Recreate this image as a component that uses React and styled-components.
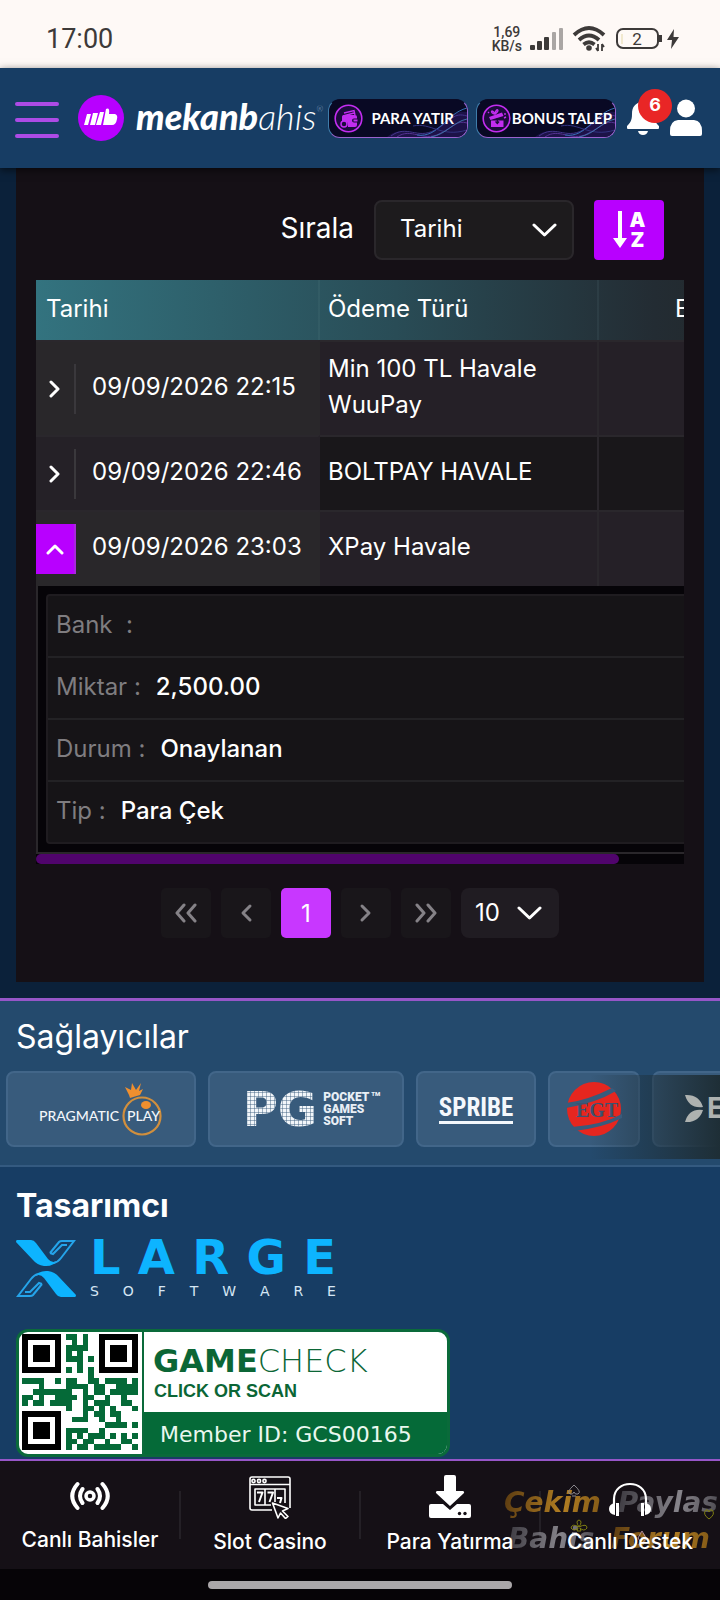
import React, { useState } from "react";
import styled, { createGlobalStyle, css } from "styled-components";

const GlobalStyle = createGlobalStyle`
  * { box-sizing: border-box; }
  body {
    margin: 0;
    background: #0b213a;
    color: #fff;
    font-family: Inter, "Open Sans", "Liberation Sans", sans-serif;
    overflow-x: hidden;
  }
  button, select { font-family: inherit; color: inherit; border: 0; padding: 0; }
  a { color: inherit; text-decoration: none; }
`;

const Page = styled.div`
  position: relative;
  min-height: 100vh;
  display: flex;
  flex-direction: column;
  overflow: hidden;
`;

/* status bar */
const StatusBar = styled.div`
  height: 68px;
  padding: 10px 40px 0 46px;
  display: flex;
  align-items: center;
  justify-content: space-between;
  background: #fef9f6;
  color: #3d3a39;
  font-family: Roboto, sans-serif;
  font-weight: 500;
`;
const Clock = styled.span`
  font-size: 27px;
  line-height: 32px;
  font-weight: 400;
`;
const StatusIcons = styled.div`
  display: flex;
  align-items: center;
  gap: 8px;
`;
const Speed = styled.span`
  font-size: 14px;
  line-height: 14px;
  text-align: center;
`;

/* header */
const Header = styled.header`
  position: relative;
  z-index: 1;
  height: 100px;
  padding: 0 18px 0 15px;
  display: flex;
  align-items: center;
  background: #173d64;
  box-shadow: 0 2px 8px rgba(0, 0, 0, 0.6);
`;
const MenuButton = styled.button`
  flex: none;
  width: 44px;
  height: 36px;
  margin: 4px 19px 0 0;
  display: flex;
  flex-direction: column;
  justify-content: space-between;
  background: none;
  span {
    height: 4px;
    width: 100%;
    border-radius: 2px;
    background: #ad4be6;
  }
`;
const Brand = styled.a`
  display: flex;
  align-items: center;
  gap: 12px;
  flex: 1;
  min-width: 0;
  svg { flex: none; }
`;
const Wordmark = styled.span`
  padding-bottom: 4px;
  font-family: Lato, sans-serif;
  font-style: italic;
  font-weight: 300;
  font-size: 36px;
  line-height: 40px;
  white-space: nowrap;
  b { font-weight: 900; }
  sup { font-size: 8px; line-height: 8px; vertical-align: 18px; color: #8fa6c0; }
`;
const Pill = styled.button`
  position: relative;
  flex: none;
  width: 140px;
  height: 39px;
  margin-right: ${(p) => (p.$tight ? 10 : 8)}px;
  padding: 0 ${(p) => (p.$tight ? 3 : 13)}px 0 5px;
  display: flex;
  align-items: center;
  justify-content: space-between;
  border: 1px solid #9a63cf;
  border-left-color: #3f7dab;
  border-top-color: #0a0a24;
  border-radius: 12px;
  background: #090924;
  overflow: hidden;
  font-family: Lato, sans-serif;
  font-size: 15px;
  line-height: 20px;
  font-weight: 700;
  white-space: nowrap;
  span, .badge { position: relative; flex: none; }
`;
const PillWave = styled.svg`
  position: absolute;
  right: 0;
  bottom: 0;
`;
const HeaderIcon = styled.button`
  position: relative;
  display: flex;
  background: none;
`;
const Count = styled.span`
  position: absolute;
  left: 12px;
  top: -12px;
  width: 34px;
  height: 34px;
  border-radius: 50%;
  background: #e92626;
  font-size: 18px;
  line-height: 32px;
  font-weight: 700;
  text-align: center;
`;

/* history panel */
const Panel = styled.main`
  margin: 0 16px 16px;
  padding: 32px 20px 44px;
  background: #151016;
`;
const SortBar = styled.div`
  display: flex;
  align-items: center;
  justify-content: flex-end;
  gap: 20px;
  padding-right: 20px;
  margin-bottom: 20px;
  label { padding-bottom: 4px; font-size: 28px; line-height: 36px; }
`;
const SelectBox = styled.div`
  position: relative;
  width: ${(p) => p.$width}px;
  select {
    appearance: none;
    width: 100%;
    height: ${(p) => (p.$small ? 50 : 60)}px;
    padding: 0 0 ${(p) => (p.$small ? 2 : 4)}px ${(p) => (p.$small ? 14 : 24)}px;
    border: ${(p) => (p.$small ? "0" : "2px solid #2a272b")};
    border-radius: 8px;
    background: ${(p) => (p.$small ? "#201c22" : "#1d1b1d")};
    font-size: 24px;
  }
  svg {
    position: absolute;
    right: 17px;
    top: 50%;
    margin-top: -7px;
    pointer-events: none;
  }
`;
const SortButton = styled.button`
  width: 70px;
  height: 60px;
  display: flex;
  align-items: center;
  justify-content: center;
  gap: 3px;
  border-radius: 4px;
  background: #b800ff;
  span {
    font-size: 20px;
    line-height: 20px;
    font-weight: 900;
  }
`;

const TableWrap = styled.div`
  overflow: hidden;
`;
const Table = styled.table`
  min-width: 720px;
  width: 111%;
  table-layout: fixed;
  border-collapse: separate;
  border-spacing: 0;
  font-size: 24px;
  line-height: 36px;
  col:nth-child(1) { width: 284px; }
  col:nth-child(2) { width: 279px; }
`;
const HeadRow = styled.tr`
  background: linear-gradient(90deg, #33737f 0, #294c56 50%, #232c33 86%, #22272a 100%);
`;
const Th = styled.th`
  height: 60px;
  padding: 0 0 2px ${(p) => p.$left || 8}px;
  border-right: 2px solid rgba(120, 160, 160, 0.1);
  font-weight: 400;
  text-align: left;
`;
const Td = styled.td`
  height: ${(p) => p.$height}px;
  padding: 0 8px 4px;
  border-top: 2px solid #2a272c;
  border-right: 2px solid #2a272c;
  background: ${(p) => (p.$dark ? "#19171a" : "#252027")};
`;
const DateTd = styled(Td)`
  padding: 0;
  border-right-color: transparent;
  background: ${(p) => (p.$dark ? "#252127" : "#29272a")};
`;
const DateCell = styled.div`
  display: flex;
  align-items: center;
  gap: 16px;
  span { padding-bottom: 4px; white-space: nowrap; }
`;
const Expand = styled.button`
  width: 40px;
  height: 50px;
  display: flex;
  align-items: center;
  justify-content: center;
  border-right: 2px solid #3a383c;
  background: none;
  ${(p) =>
    p.$open &&
    css`
      background: #b800ff;
      border-color: #a927dd;
    `}
`;
const DetailTd = styled.td`
  padding: 8px;
  border-left: 2px solid #2a272b;
  border-bottom: 2px solid #2a272b;
  background: #060408;
`;
const Details = styled.dl`
  margin: 0;
  border: 2px solid #1f1c20;
  border-radius: 4px;
  background: #161417;
`;
const Detail = styled.div`
  display: flex;
  align-items: center;
  height: 62px;
  padding: 0 8px 2px;
  border-bottom: 2px solid #232225;
  &:last-child { border-bottom: 0; height: 60px; }
  dt { color: #7f7d80; white-space: pre; }
  dd { margin: 0 0 0 15px; font-weight: 500; }
`;
const ScrollTrack = styled.div`
  height: 10px;
  background: #060408;
`;
const ScrollThumb = styled.div`
  width: 90%;
  height: 10px;
  border-radius: 5px;
  background: #50046c;
`;

const Pager = styled.nav`
  display: flex;
  justify-content: center;
  gap: 10px;
  margin-top: 24px;
`;
const PageButton = styled.button`
  width: 50px;
  height: 50px;
  display: flex;
  align-items: center;
  justify-content: center;
  border-radius: 5px;
  background: ${(p) => (p.$current ? "#c837ff" : "#19161a")};
  font-size: 24px;
`;

/* providers */
const Providers = styled.section`
  position: relative;
  border-top: 3px solid #9656c8;
  border-bottom: 2px solid #345a80;
  background: #244a6d;
  padding: 18px 0 18px 6px;
`;
const Title = styled.h2`
  margin: 0;
  font-size: 32px;
  line-height: 36px;
  font-weight: ${(p) => (p.$bold ? 700 : 400)};
`;
const ProviderTitle = styled(Title)`
  padding-left: 10px;
  margin-bottom: 16px;
`;
const Cards = styled.div`
  display: flex;
  gap: 12px;
  overflow: hidden;
`;
const Card = styled.a`
  flex: none;
  width: ${(p) => p.$width}px;
  height: 76px;
  display: flex;
  align-items: center;
  justify-content: center;
  gap: 6px;
  border: 2px solid #426689;
  border-radius: 8px;
  background: #385b7c;
  svg { position: relative; z-index: 1; }
`;
const Fade = styled.div`
  position: absolute;
  right: 0;
  bottom: 6px;
  width: 130px;
  height: 84px;
  background: linear-gradient(90deg, rgba(30, 46, 54, 0), rgba(30, 46, 54, 0.6) 60%, #1e2e36);
`;
const PixelText = styled.span`
  font: 700 48px/48px "DejaVu Sans", sans-serif;
  color: transparent;
  background:
    repeating-linear-gradient(90deg, transparent 0 3px, rgba(56, 91, 124, 0.45) 3px 4px),
    repeating-linear-gradient(transparent 0 3px, rgba(56, 91, 124, 0.45) 3px 4px),
    #f2f6fa;
  background-clip: text;
`;
const PixelSub = styled.span`
  position: relative;
  font: 900 12px/12px Roboto, sans-serif;
  color: #e8eef5;
  small { position: absolute; left: 48px; top: -3px; font-size: 6px; }
`;
const Spribe = styled.span`
  border-bottom: 3px solid #f4f8fc;
  font: 700 25px/26px "Liberation Sans Narrow", "Roboto Condensed", "DejaVu Sans Condensed", sans-serif;
  color: #f4f8fc;
`;

/* designer */
const Designer = styled.section`
  flex: 1;
  padding: 21px 16px 2px;
  background: #173d64;
`;
const XLarge = styled.a`
  display: flex;
  gap: 14px;
  margin-top: 15px;
  width: 320px;
`;
const XWords = styled.div`
  flex: 1;
`;
const Spread = styled.div`
  display: flex;
  justify-content: space-between;
  ${(p) =>
    p.$small
      ? css`font: 400 14px/14px "DejaVu Sans", sans-serif; color: #d5e6f4; margin-top: 9px;`
      : css`font: 700 48px/36px "DejaVu Sans", sans-serif; color: #0db4ff;`}
`;
const GameCheck = styled.a`
  display: flex;
  width: 434px;
  height: 128px;
  margin-top: 31px;
  border: 3px solid #0a6a3a;
  border-radius: 12px;
  background: #fff;
  overflow: hidden;
  color: #0b6636;
`;
const QrBox = styled.div`
  width: 125px;
  padding: 2px 0 0 3px;
  border-right: 2px solid #0a6a3a;
`;
const GameText = styled.div`
  flex: 1;
  display: flex;
  flex-direction: column;
`;
const GameName = styled.div`
  padding: 11px 0 0 9px;
  font: 200 32px/36px "DejaVu Sans", sans-serif;
  white-space: nowrap;
  b { font-weight: 700; }
`;
const GameSub = styled.div`
  padding-left: 10px;
  font: 700 18px/24px "Liberation Sans", sans-serif;
`;
const Member = styled.div`
  margin-top: auto;
  padding: 4px 0 0 16px;
  background: #056a38;
  color: #e9f8ef;
  font: 400 22px/38px "DejaVu Sans", sans-serif;
`;

/* bottom navigation */
const BottomNav = styled.nav`
  position: relative;
  display: flex;
  height: 110px;
  border-top: 2px solid #9656c8;
  background: #151016;
`;
const NavItem = styled.a`
  position: relative;
  z-index: 1;
  flex: 1 1 0;
  display: flex;
  flex-direction: column;
  align-items: center;
  padding-top: 14px;
  gap: 9px;
  font-size: 21px;
  line-height: 28px;
  font-weight: 500;
  white-space: nowrap;
`;
const Divider = styled.i`
  align-self: center;
  width: 2px;
  height: 48px;
  margin: 0 -1px;
  background: #242026;
`;
const Watermark = styled.div`
  position: absolute;
  right: 2px;
  top: 24px;
  width: 214px;
  font: italic 700 28px/36px "DejaVu Sans", sans-serif;
  opacity: 0.8;
  pointer-events: none;
  svg { position: absolute; left: 0; top: 0; }
`;
const WatermarkLine = styled.div`
  display: flex;
  justify-content: space-between;
  padding: 0 ${(p) => (p.$inset ? 8 : 0)}px 0 ${(p) => (p.$inset ? 4 : 0)}px;
`;
const Metal = styled.span`
  color: transparent;
  background: ${(p) =>
    p.$gold
      ? "linear-gradient(100deg, #6b4510, #d99a26 60%, #9c6a17)"
      : "linear-gradient(100deg, #45434a, #a3a1a8 60%, #5a585f)"};
  background-clip: text;
`;
const HomeBar = styled.div`
  height: 32px;
  display: flex;
  justify-content: center;
  padding-top: 12px;
  background: #060407;
  span { width: 304px; height: 8px; border-radius: 4px; background: #aaa7a9; }
`;

const Chevron = ({ width = 25, height = 14, d = "M2 2 12.500 12 23 2", color = "#fff", stroke = 3 }) => (
  <svg width={width} height={height} fill="none" stroke={color} strokeWidth={stroke} strokeLinecap="round" strokeLinejoin="round">
    <path d={d} />
  </svg>
);

const Wave = () => (
  <PillWave width="80" height="37" fill="none" strokeWidth="1">
    <path d="M0 37C18 22 28 42 46 31S64 10 80 12V37Z" fill="#1d1248" stroke="none" />
    <path d="M4 36C20 24 30 40 48 30S66 12 80 16" stroke="#43358c" />
    <path d="M10 37C24 27 36 42 52 34S70 20 80 23" stroke="#553391" />
    <path d="M30 35C52 38 58 14 80 8" stroke="#356fb4" />
    <path d="M26 26C44 22 54 38 80 30" stroke="#333480" />
    <path d="M44 37C60 34 66 22 80 19" stroke="#3f74a8" />
  </PillWave>
);

const WalletIcon = () => (
  <svg className="badge" width="29" height="29" viewBox="0 0 29 29" fill="none">
    <circle cx="14.500" cy="14.500" r="13.300" fill="#1d0b3d" stroke="#c32df0" strokeWidth="1.600" />
    <path d="M10 9 20 6.500 21 11M9 12 20 9" stroke="#c32df0" strokeWidth="1.400" />
    <path d="M8 12.500Q8 11 10 11H21Q23 11 23 13V14.500H20Q18 14.500 18 16.500T20 18.500H23V21Q23 23 21 23H14Q15 16 8 17Z" fill="#c32df0" />
    <circle cx="10" cy="20" r="3" stroke="#c32df0" strokeWidth="1.500" />
    <path d="M19.500 16.500h4" stroke="#c32df0" strokeWidth="2" />
  </svg>
);

const GiftIcon = () => (
  <svg className="badge" width="29" height="29" viewBox="0 0 29 29" fill="none">
    <circle cx="14.500" cy="14.500" r="13.300" fill="#1d0b3d" stroke="#c32df0" strokeWidth="1.600" />
    <path d="M7 13 20 8.500 21.500 12 8.500 16ZM9 16.500H21.500V23H9Z" fill="#c32df0" />
    <path d="M13 10C7 9 10 4 13 10C14 3 19 6 13 10M22 14l2-1M23 11v-2M7 9 6 8" stroke="#c32df0" strokeWidth="1.400" />
    <path d="M15.300 14V19M13.500 17.500l1.800 2 1.800-2" stroke="#1d0b3d" strokeWidth="1.200" />
  </svg>
);

const QR = [
  "#######.##.#..#######",
  "#.....#..#.#..#.....#",
  "#.###.#.####..#.###.#",
  "#.###.#.#.#...#.###.#",
  "#.###.#.###.#.#.###.#",
  "#.....#...#...#.....#",
  "#######.#.#.#.#######",
  "............#........",
  "####..#.##..##.####.#",
  "...#....####.##..####",
  "..#######..#.##.#####",
  "##.#..####.##..#..#..",
  "#.##.####..#.###..##.",
  "........#..##.#.#...#",
  "#######....#.##.##...",
  "#.....#..###..#..#...",
  "#.###.#........####.#",
  "#.###.#.####..#......",
  "#.###.#.#.#.###.#.#.#",
  "#.....#.##.##..#..##.",
  "#######.#.##.#####..#",
];
const isFinder = (x, y) => (x < 7 && (y < 7 || y > 13)) || (x > 13 && y < 7);

const QrCode = () => (
  <svg width="116" height="116" viewBox="0 0 21 21" shapeRendering="crispEdges" aria-hidden="true">
    {QR.flatMap((row, y) =>
      [...row].map((c, x) =>
        c === "#" ? (
          <rect key={`${x}-${y}`} x={x} y={y} width="1" height="1" fill={isFinder(x, y) ? "#000" : "#056a38"} />
        ) : null
      )
    )}
  </svg>
);

const LiveIcon = () => (
  <svg width="42" height="42" viewBox="0 0 42 42" fill="none" stroke="#fff" strokeWidth="4" strokeLinecap="round">
    <circle cx="21" cy="21" r="4" strokeWidth="3.500" />
    <path d="M13.500 14Q8.500 21 13.500 28M8.500 9Q-2 21 8.500 33M28.500 14Q33.500 21 28.500 28M33.500 9Q44 21 33.500 33" />
  </svg>
);

const SlotIcon = () => (
  <svg width="44" height="44" viewBox="0 0 44 44" fill="none" stroke="#fff" strokeWidth="1.600" strokeLinejoin="round">
    <path d="M24 35H4Q2 35 2 33V4Q2 2 4 2H40Q42 2 42 4V33M2 9.500H42" />
    <circle cx="5.500" cy="6" r="1.600" />
    <circle cx="11" cy="6" r="1.600" />
    <circle cx="16.500" cy="6" r="1.600" />
    <path d="M23 30H7V14H37V28M17 14V30M27 14V27" />
    <path d="M9 17.500h5.500L11 27M19.500 17.500H25L21.500 27M29 23h4.500L32 28" strokeWidth="2" />
    <path d="M24.500 28 40 33.500 34.500 36 40 41.500 37.500 43.500 32.500 38 30 43Z" fill="#151016" />
  </svg>
);

const DepositIcon = () => (
  <svg width="42" height="44" viewBox="0 0 42 44" fill="#fff">
    <path d="M17 0H25Q27 0 27 2V16H34Q36 17 34.500 18.500L21 31 7.500 18.500Q6 17 8 16H15V2Q15 0 17 0Z" />
    <path d="M2 29H14L21 35 28 29H40Q42 29 42 31V41Q42 43 40 43H2Q0 43 0 41V31Q0 29 2 29Z" />
    <path d="M12.500 25.500 21 33.500 29.500 25.500" fill="none" stroke="#151016" strokeWidth="1.200" />
    <circle cx="30.500" cy="38.500" r="1.700" fill="#151016" />
    <circle cx="36" cy="38.500" r="1.700" fill="#151016" />
  </svg>
);

const HeadsetIcon = () => (
  <svg width="44" height="44" viewBox="0 0 44 44" fill="none">
    <path d="M6 29V24C6 4 38 4 38 24V29" stroke="#fff" strokeWidth="2.200" />
    <path d="M7 28Q1 29 1 34T7 40ZM37 28Q43 29 43 34T37 40ZM8 28H11V41H8ZM33 28H36V41H33Z" fill="#fff" />
  </svg>
);

const rows = [
  { date: "09/09/2026 22:15", type: "Min 100 TL Havale WuuPay", height: 95 },
  { date: "09/09/2026 22:46", type: "BOLTPAY HAVALE", height: 75 },
  { date: "09/09/2026 23:03", type: "XPay Havale", height: 76 },
];

const details = [
  ["Bank  :", ""],
  ["Miktar :", "2,500.00"],
  ["Durum :", "Onaylanan"],
  ["Tip :", "Para Çek"],
];

const navItems = [
  { label: "Canlı Bahisler", Icon: LiveIcon },
  { label: "Slot Casino", Icon: SlotIcon },
  { label: "Para Yatırma", Icon: DepositIcon },
  { label: "Canlı Destek", Icon: HeadsetIcon },
];

const App = () => {
  const [openRow, setOpenRow] = useState(2);

  return (
    <Page>
      <GlobalStyle />

      <StatusBar>
        <Clock>17:00</Clock>
        <StatusIcons>
          <Speed>
            1,69
            <br />
            KB/s
          </Speed>
          <svg width="34" height="24" fill="#3d3a39">
            <rect x="0" y="18" width="5" height="5" rx="1" />
            <rect x="7" y="14" width="5" height="9" rx="1" />
            <rect x="14" y="10" width="5" height="13" rx="1" />
            <rect x="22" y="5" width="4" height="18" rx="1" fill="#aaa6a4" />
            <rect x="29" y="1" width="4" height="22" rx="1" fill="#aaa6a4" />
          </svg>
          <svg width="34" height="26" viewBox="0 0 34 26" fill="none" stroke="#3d3a39" strokeWidth="3.800">
            <path d="M2 9Q17-5 32 9M7 14Q17 5 27 14M11.500 18.500Q17 14 22.500 18.500" />
            <circle cx="17" cy="22" r="2.800" fill="#3d3a39" stroke="none" />
            <path d="M26 18v7M30 25v-7M24 22l2 3M32 21l-2-3" strokeWidth="1.800" />
          </svg>
          <svg width="66" height="24" viewBox="0 0 66 24" fill="none" stroke="#3d3a39" strokeWidth="2">
            <rect x="3" y="2" width="41" height="19" rx="6" />
            <path d="M46.500 8v7" strokeWidth="3" />
            <path d="M8 7v10" stroke="#e5d9a8" strokeWidth="1" />
            <text x="23" y="18" textAnchor="middle" fontSize="17" fontWeight="400" fill="#3d3a39" stroke="none">2</text>
            <path d="M60 2 53 13H58L57 22 65 10H59.500Z" fill="#3d3a39" stroke="none" />
          </svg>
        </StatusIcons>
      </StatusBar>

      <Header>
        <MenuButton aria-label="Menu">
          <span />
          <span />
          <span />
        </MenuButton>
        <Brand href="/">
          <svg width="46" height="46" viewBox="0 0 46 46" fill="#fff">
            <circle cx="23" cy="23" r="23" fill="#b800ff" />
            <path d="M9 19H13L10 30H6ZM15 18H20L17 30H12ZM22 17H26L23 30H18Z" />
            <path d="M28 14Q32 12 31 19H37Q40 20 39 24 38 30 34 30H25Z" />
          </svg>
          <Wordmark>
            <b>mekanb</b>ahis<sup>®</sup>
          </Wordmark>
        </Brand>
        <Pill>
          <Wave />
          <WalletIcon />
          <span>PARA YATIR</span>
        </Pill>
        <Pill $tight>
          <Wave />
          <GiftIcon />
          <span>BONUS TALEP</span>
        </Pill>
        <HeaderIcon aria-label="6">
          <svg width="34" height="34" viewBox="0 0 34 34" fill="#fff">
            <path d="M17 0C9 2 6 6 6 13 6 20 4 22 1 25V27Q1 28 2 28H32Q33 28 33 27V25C30 22 28 20 28 13 28 6 25 2 17 0ZM12 30H22Q21 34 17 34T12 30Z" />
          </svg>
          <Count>6</Count>
        </HeaderIcon>
        <HeaderIcon aria-label="Profil">
          <svg width="42" height="38" viewBox="-10 0 42 38" fill="#fff">
            <circle cx="16" cy="9.500" r="9" />
            <path d="M8 21H24Q32 22 32 32V35Q32 37 30 37H2Q0 37 0 35V32Q0 22 8 21Z" />
          </svg>
        </HeaderIcon>
      </Header>

      <Panel>
        <SortBar>
          <label htmlFor="sort">Sırala</label>
          <SelectBox $width={200}>
            <select id="sort">
              <option>Tarihi</option>
            </select>
            <Chevron />
          </SelectBox>
          <SortButton aria-label="A Z">
            <svg width="14" height="38" fill="#fff">
              <path d="M5 0H9V27H14L7 37 0 27H5Z" />
            </svg>
            <span>
              A<br />Z
            </span>
          </SortButton>
        </SortBar>

        <TableWrap>
          <Table>
            <colgroup>
              <col />
              <col />
              <col />
            </colgroup>
            <thead>
              <HeadRow>
                <Th $left={10}>Tarihi</Th>
                <Th>Ödeme Türü</Th>
                <Th $left={76}>E</Th>
              </HeadRow>
            </thead>
            <tbody>
              {rows.map((row, i) => (
                <React.Fragment key={row.date}>
                  <tr>
                    <DateTd $height={row.height} $dark={i % 2 === 1}>
                      <DateCell>
                        <Expand
                          $open={openRow === i}
                          aria-label={row.date}
                          onClick={() => setOpenRow(openRow === i ? null : i)}
                        >
                          {openRow === i ? (
                            <Chevron width={20} height={12} d="M3 10 10 3 17 10" />
                          ) : (
                            <Chevron width={12} height={20} d="M2 3 9 10 2 17" />
                          )}
                        </Expand>
                        <span>{row.date}</span>
                      </DateCell>
                    </DateTd>
                    <Td $height={row.height} $dark={i % 2 === 1}>{row.type}</Td>
                    <Td $height={row.height} $dark={i % 2 === 1} />
                  </tr>
                  {openRow === i && (
                    <tr>
                      <DetailTd colSpan={3}>
                        <Details>
                          {details.map(([name, value]) => (
                            <Detail key={name}>
                              <dt>{name}</dt>
                              <dd>{value}</dd>
                            </Detail>
                          ))}
                        </Details>
                      </DetailTd>
                    </tr>
                  )}
                </React.Fragment>
              ))}
            </tbody>
          </Table>
        </TableWrap>
        <ScrollTrack>
          <ScrollThumb />
        </ScrollTrack>

        <Pager>
          <PageButton aria-label="«">
            <Chevron width={24} height={20} d="M10 2 3 10 10 18M21 2 14 10 21 18" color="#858287" />
          </PageButton>
          <PageButton aria-label="‹">
            <Chevron width={14} height={20} d="M11 3 4 10 11 17" color="#858287" />
          </PageButton>
          <PageButton $current>1</PageButton>
          <PageButton aria-label="›">
            <Chevron width={14} height={20} d="M3 3 10 10 3 17" color="#858287" />
          </PageButton>
          <PageButton aria-label="»">
            <Chevron width={24} height={20} d="M3 2 10 10 3 18M14 2 21 10 14 18" color="#858287" />
          </PageButton>
          <SelectBox $small $width={98}>
            <select aria-label="10">
              <option>10</option>
            </select>
            <Chevron />
          </SelectBox>
        </Pager>
      </Panel>

      <Providers>
        <ProviderTitle>Sağlayıcılar</ProviderTitle>
        <Cards>
          <Card href="#pragmatic" $width={190}>
            <svg width="126" height="56" viewBox="0 0 126 56" fill="none">
              <circle cx="104" cy="35" r="18.500" stroke="#d18f3d" strokeWidth="2.200" />
              <path d="M91 14 87 6 93 9 94 2 98 9 103 2 101 10 105 8 102 14 92 17Z" fill="#ef8f2f" />
              <ellipse cx="108" cy="24" rx="5" ry="4" fill="#ef8f2f" />
              <text x="1" y="40" fontFamily="Lato, sans-serif" fontSize="14" fontWeight="500" fill="#f2f6fa">PRAGMATIC</text>
              <text x="89" y="40" fontFamily="Lato, sans-serif" fontSize="14" fontWeight="500" fill="#f2f6fa">PLAY</text>
            </svg>
          </Card>
          <Card href="#pg" $width={196}>
            <PixelText>PG</PixelText>
            <PixelSub>
              POCKET
              <br />
              GAMES
              <br />
              SOFT
              <small>TM</small>
            </PixelSub>
          </Card>
          <Card href="#spribe" $width={120}>
            <Spribe>SPRIBE</Spribe>
          </Card>
          <Card href="#egt" $width={92}>
            <svg width="56" height="56" viewBox="0 0 56 56">
              <circle cx="28" cy="28" r="27" fill="#e6261f" />
              <path d="M0 22Q20 20 46 7L50 10Q30 22 0 27ZM6 46Q36 44 56 33V37Q36 47 8 50Z" fill="#385b7c" />
              <text x="31" y="36" textAnchor="middle" fontFamily="Liberation Serif, serif" fontSize="20" fontWeight="700" fill="#3c5270">EGT</text>
            </svg>
          </Card>
          <Card href="#endorphina" $width={190}>
            <svg width="124" height="34" viewBox="0 0 124 34" fill="#aeb2b0">
              <path d="M0 3Q14 2 18 15 4 17 0 3ZM0 30Q14 31 18 18 4 16 0 30Z" />
              <text x="22" y="26" fontFamily="Inter, sans-serif" fontSize="28" fontWeight="700">E</text>
            </svg>
          </Card>
        </Cards>
        <Fade />
      </Providers>

      <Designer>
        <Title $bold>Tasarımcı</Title>
        <XLarge href="#xlarge">
          <svg width="60" height="59" viewBox="0 0 60 59" fill="none">
            <path d="M1 1H15Q18 1 20 4L32 20Q37 26 44 20 37 28 28 27 21 26 17 21L0 3Q0 1 1 1Z" fill="#0db4ff" />
            <path d="M34 14 43 3Q44 2 46 2H58L45 19Q42 23 38 24M34 14 37 15 46 6H51" stroke="#25a4ea" strokeWidth="2" />
            <path d="M59 58H45Q42 58 40 55L28 39Q23 33 16 39 23 31 32 32 39 33 43 38L60 56Q60 58 59 58Z" fill="#0db4ff" />
            <path d="M26 45 17 56Q16 57 14 57H2L15 40Q18 36 22 35M26 45 23 44 14 53H9" stroke="#25a4ea" strokeWidth="2" />
          </svg>
          <XWords>
            <Spread>
              {[..."LARGE"].map((c) => (
                <span key={c}>{c}</span>
              ))}
            </Spread>
            <Spread $small>
              {[..."SOFTWARE"].map((c) => (
                <span key={c}>{c}</span>
              ))}
            </Spread>
          </XWords>
        </XLarge>
        <GameCheck href="#gamecheck">
          <QrBox>
            <QrCode />
          </QrBox>
          <GameText>
            <GameName>
              <b>GAME</b>CHECK
            </GameName>
            <GameSub>CLICK OR SCAN</GameSub>
            <Member>Member ID: GCS00165</Member>
          </GameText>
        </GameCheck>
      </Designer>

      <BottomNav>
        {navItems.map(({ label, Icon }, i) => (
          <React.Fragment key={label}>
            {i > 0 && <Divider />}
            <NavItem href="#nav">
              <Icon />
              {label}
            </NavItem>
          </React.Fragment>
        ))}
        <Watermark>
          <WatermarkLine>
            <Metal $gold>Çekim</Metal>
            <Metal>Paylas</Metal>
          </WatermarkLine>
          <WatermarkLine $inset>
            <Metal>Bahis</Metal>
            <Metal $gold>Forum</Metal>
          </WatermarkLine>
          <svg width="214" height="76" fill="none" strokeWidth="1">
            <path d="M70 0Q62 7 66 9 69 10 70 7 71 10 74 9 78 7 70 0ZM68 11H72" stroke="#a9a7ad" />
            <path d="M205 34Q198 29 202 25 204 24 205 27 206 24 208 25 212 29 205 34Z" stroke="#9a9a10" />
            <path d="M75 42Q71 36 75 35 79 36 75 42 83 38 83 43 80 47 76 43L77 46H73L74 43Q70 47 67 43 68 38 75 42Z" stroke="#9a9a10" />
            <path d="M138 46 142 53 138 59 134 53Z" stroke="#d5aab8" />
          </svg>
        </Watermark>
      </BottomNav>
      <HomeBar>
        <span />
      </HomeBar>
    </Page>
  );
};

export default App;
